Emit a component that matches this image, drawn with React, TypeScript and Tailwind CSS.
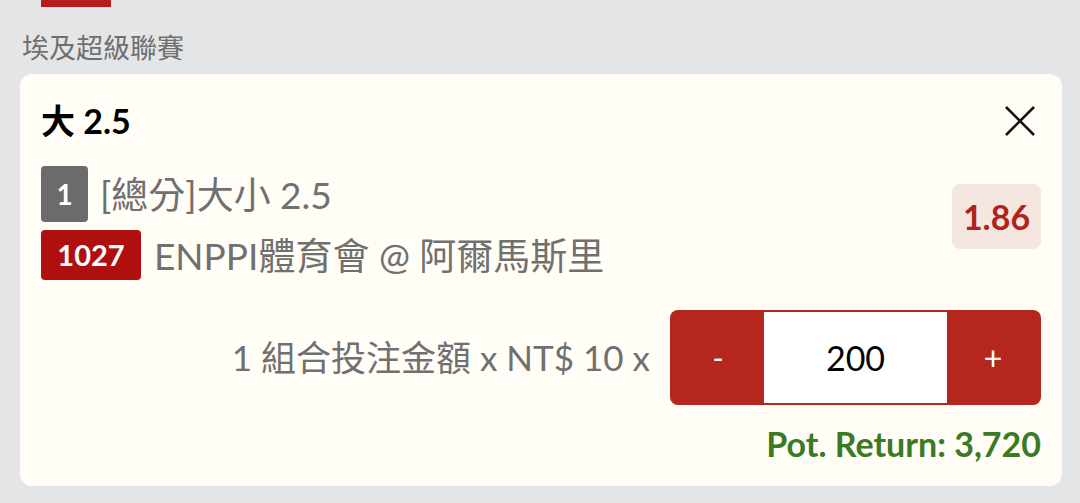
import React from "react";

const font = { fontFamily: 'Lato, "Noto Sans CJK TC", sans-serif' };

export default function App() {
  return (
    <div className="w-[1080px] h-[503px] bg-[#e4e5e7] overflow-hidden" style={font}>
      <div className="pl-[41px]">
        <div className="w-[70px] h-[7px] bg-[#b81c1c]" />
      </div>
      <div className="pl-[22px] pt-[24px] text-[27px] leading-[34px] text-[#6f6f6f]">埃及超級聯賽</div>
      <div className="ml-[20px] mr-[18px] mt-[9px] h-[412px] rounded-[12px] bg-[#fffdf5] px-[21px] pt-[24px]">
        <div className="flex items-center justify-between h-[46px]">
          <div className="text-[34px] font-bold text-black leading-none">大 2.5</div>
          <svg width="32" height="32" viewBox="0 0 32 32" className="mr-[5px]">
            <path d="M2 2 L30 30 M30 2 L2 30" stroke="#111" strokeWidth="2.6" fill="none" />
          </svg>
        </div>
        <div className="flex items-start justify-between mt-[22px]">
          <div className="flex flex-col gap-[8px]">
            <div className="flex items-center gap-[12px]">
              <div className="w-[47px] h-[56px] rounded-[4px] bg-[#6b6b6b] text-white text-[28px] font-bold flex items-center justify-center">1</div>
              <div className="text-[37px] text-[#707070] leading-none">[總分]大小 2.5</div>
            </div>
            <div className="flex items-center gap-[13px]">
              <div className="w-[100px] h-[50px] rounded-[4px] bg-[#b00f0f] text-white text-[29px] font-bold flex items-center justify-center">1027</div>
              <div className="text-[37px] text-[#707070] leading-none">ENPPI體育會 @ 阿爾馬斯里</div>
            </div>
          </div>
          <div className="mt-[18px] w-[89px] h-[65px] rounded-[8px] bg-[#f6e6e0] text-[#b0231b] text-[34px] font-bold flex items-center justify-center">1.86</div>
        </div>
        <div className="flex items-center justify-end mt-[30px] gap-[20px]">
          <div className="text-[35px] text-[#707070]">1 組合投注金額 x NT$ 10 x</div>
          <div className="w-[371px] h-[95px] rounded-[8px] bg-[#b5271e] flex items-stretch p-[2px]">
            <div className="w-[92px] flex items-center justify-center text-white text-[30px]">-</div>
            <div className="flex-1 bg-white flex items-center justify-center text-[34px] text-black">200</div>
            <div className="w-[92px] flex items-center justify-center text-white text-[32px]">+</div>
          </div>
        </div>
        <div className="flex justify-end mt-[22px]">
          <div className="text-[34px] font-bold text-[#3b7a25] leading-none">Pot. Return: 3,720</div>
        </div>
      </div>
    </div>
  );
}
